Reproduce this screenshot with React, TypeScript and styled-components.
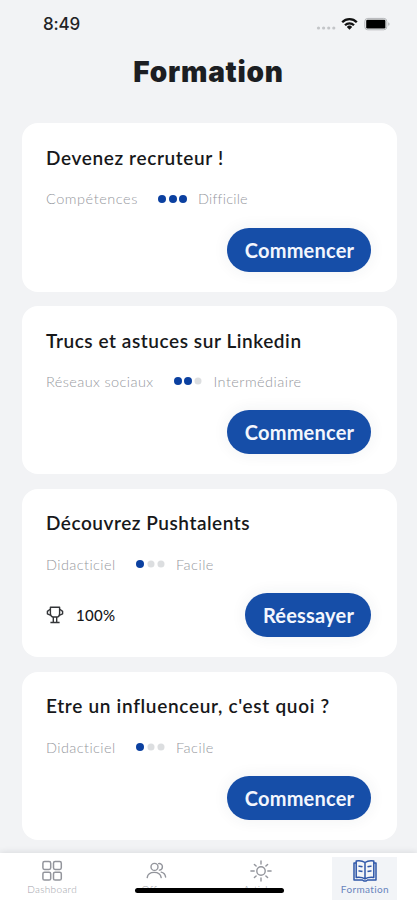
import React from "react";
import styled, { createGlobalStyle } from "styled-components";

const Global = createGlobalStyle`
  * { box-sizing: border-box; }
  body { margin: 0; background: #f2f3f5; font-family: Lato, "Open Sans", sans-serif; }
`;

const Screen = styled.div`
  width: 417px;
  height: 900px;
  display: flex;
  flex-direction: column;
  overflow: hidden;
  background: #f2f3f5;
`;

const StatusBar = styled.div`
  height: 48px;
  flex: none;
  display: flex;
  align-items: center;
  justify-content: space-between;
  padding: 0 26px 0 43px;
`;

const Clock = styled.span`
  font: 500 17px/20px Inter, sans-serif;
  letter-spacing: -0.2px;
  color: #222325;
`;

const StatusIcons = styled.svg`
  display: block;
`;

const Heading = styled.h1`
  margin: 0;
  height: 75px;
  flex: none;
  padding-top: 4px;
  text-align: center;
  font: 900 28px/40px Inter, sans-serif;
  letter-spacing: 0.75px;
  color: #1c1e22;
`;

const List = styled.main`
  flex: 1;
  min-height: 0;
  display: flex;
  flex-direction: column;
  gap: 14.6px;
  padding: 0.4px 20.5px 0 21.5px;
`;

const Card = styled.article`
  height: 168.2px;
  flex: none;
  display: flex;
  flex-direction: column;
  padding: 22.5px 25.5px 20px 24.5px;
  border-radius: 16px;
  background: #fff;
`;

const Title = styled.h2<{ $track: number }>`
  margin: 0;
  font-size: 19px;
  line-height: 24px;
  font-weight: 600;
  letter-spacing: ${(p) => p.$track}px;
  white-space: nowrap;
  color: #17181a;
`;

const Meta = styled.div`
  display: flex;
  align-items: center;
  height: 20px;
  margin-top: 18.8px;
  font-size: 14.5px;
  font-weight: 300;
  color: #96989e;
`;

const Label = styled.span<{ $width?: number; $track: number }>`
  width: ${(p) => (p.$width ? `${p.$width}px` : "auto")};
  letter-spacing: ${(p) => p.$track}px;
  white-space: nowrap;
`;

const Dots = styled.span`
  display: flex;
  gap: 2.3px;
  margin: 0 11px 0 20.4px;
`;

const Dot = styled.i<{ $on: boolean }>`
  width: 8px;
  height: 8px;
  border-radius: 50%;
  background: ${(p) => (p.$on ? "#0b40a0" : "#dcdee0")};
  transform: scale(${(p) => (p.$on ? 1 : 0.88)});
`;

const Footer = styled.div`
  display: flex;
  align-items: center;
  justify-content: space-between;
  margin-top: auto;
`;

const Score = styled.div`
  display: flex;
  align-items: center;
  gap: 12px;
  padding-bottom: 1px;
  font-size: 15px;
  font-weight: 500;
  letter-spacing: 0.3px;
  color: #17181a;
`;

const Action = styled.button<{ $width: number }>`
  width: ${(p) => p.$width}px;
  height: 44px;
  margin-left: auto;
  padding: 0 0 0 1px;
  border: 0;
  border-radius: 22px;
  background: #164ea8;
  box-shadow: 0 0 16px rgba(40, 50, 70, 0.07);
  color: #f3f6fd;
  font: 700 20px/44px Lato, sans-serif;
  letter-spacing: 0.2px;
`;

const TabBar = styled.nav`
  position: relative;
  height: 47px;
  flex: none;
  display: grid;
  grid-template-columns: repeat(4, 104.25px);
  justify-items: center;
  padding-top: 4px;
  background: #fff;
  box-shadow: 0 -1px 6px rgba(30, 40, 50, 0.11);
`;

const Tab = styled.a<{ $active?: boolean }>`
  width: 65px;
  height: 43px;
  display: flex;
  flex-direction: column;
  align-items: center;
  padding-top: 3px;
  background: ${(p) => (p.$active ? "#f2f4f7" : "transparent")};
  color: ${(p) => (p.$active ? "#2f57a9" : "#93959c")};
`;

const TabText = styled.span<{ $active?: boolean }>`
  font-size: 10px;
  line-height: 12px;
  margin-top: 1px;
  letter-spacing: 0.35px;
  font-weight: ${(p) => (p.$active ? 400 : 300)};
  color: ${(p) => (p.$active ? "#6884bd" : "#a0a2a9")};
`;

const HomeIndicator = styled.div`
  position: absolute;
  left: 134.5px;
  top: 35px;
  width: 149px;
  height: 5px;
  border-radius: 3px;
  background: #000;
`;

const Trophy = () => (
  <svg width="18" height="18" viewBox="0 0 18 18" fill="none" stroke="#333538" strokeWidth="1.4" strokeLinejoin="round">
    <path d="M4.4 1.2h9.2v6c0 2.4-1.3 3.8-2.9 3.8H7.3c-1.6 0-2.9-1.4-2.9-3.8z" />
    <path d="M4.2 3.2 1.4 5.4v2.4L4.8 9.4M13.8 3.2l2.8 2.2v2.4l-3.4 1.6M7.3 11v5.2M10.7 11v5.2M4.4 16.5h9.2" />
  </svg>
);

const GridIcon = () => (
  <svg width="22" height="22" viewBox="0 0 22 22" fill="none" stroke="currentColor" strokeWidth="1.5">
    <rect x="1.9" y="1.6" width="7.8" height="7.8" rx="1.6" />
    <rect x="12.5" y="1.6" width="7.8" height="7.8" rx="1.6" />
    <rect x="1.9" y="12.2" width="7.8" height="7.8" rx="1.6" />
    <rect x="12.5" y="12.2" width="7.8" height="7.8" rx="1.6" />
  </svg>
);

const PeopleIcon = () => (
  <svg width="22" height="22" viewBox="0 0 22 22" fill="none" stroke="currentColor" strokeWidth="1.4" strokeLinecap="round">
    <circle cx="9.5" cy="6.9" r="3.5" />
    <path d="M13.6 3.6c2-.5 3.8 1 3.8 3.1 0 1.8-1.3 3.2-3 3.4M2.2 17.6c.5-3.4 3.4-5.2 7-5.2s6.4 1.8 7 5.2M16.2 12.1c2.4.5 4 2 4.4 4.9" />
  </svg>
);

const SunIcon = () => (
  <svg width="22" height="22" viewBox="0 0 22 22" fill="none" stroke="currentColor" strokeWidth="1.4" strokeLinecap="round">
    <circle cx="11" cy="11" r="4.2" />
    <path d="M11 1v3M11 18v3M.9 11h3.3M17.8 11h3.3M4.4 4.4l1.7 1.7M15.9 15.9l1.7 1.7M4.4 17.6l1.7-1.7M15.9 6.1l1.7-1.7" />
  </svg>
);

const BookIcon = () => (
  <svg width="24" height="22" viewBox="0 0 24 22" fill="none" stroke="currentColor" strokeWidth="1.5" strokeLinejoin="round">
    <path d="M12 2.5C9.7.9 6 .6 3.2 1v16.5c3.2-.4 6.3-.1 8.8 1.4 2.5-1.5 5.6-1.8 8.8-1.4V1C18 .6 14.3.9 12 2.5zM12 2.5v16.4" />
    <path d="M3 3H1v17h8.5l1.3 1h2.4l1.3-1H23V3h-2M5.5 6.2c1.5-.2 2.7 0 4 .5M5.5 11c1.5-.2 2.7 0 4 .5M18.5 6.2c-1.5-.2-2.7 0-4 .5M18.5 11c-1.5-.2-2.7 0-4 .5" />
  </svg>
);

const courses = [
  { title: "Devenez recruteur !", track: 0.63, topic: "Compétences", topicWidth: 92, topicTrack: 0.55, level: 3, difficulty: "Difficile", difficultyTrack: 0.2, action: "Commencer", width: 144 },
  { title: "Trucs et astuces sur Linkedin", track: 0.56, topic: "Réseaux sociaux", topicWidth: 107.5, topicTrack: 0.4, level: 2, difficulty: "Intermédiaire", difficultyTrack: 0.46, action: "Commencer", width: 144 },
  { title: "Découvrez Pushtalents", track: 0.53, topic: "Didacticiel", topicWidth: 70, topicTrack: 0.42, level: 1, difficulty: "Facile", difficultyTrack: 0.5, action: "Réessayer", width: 126, score: "100%" },
  { title: "Etre un influenceur, c'est quoi ?", track: 0.69, topic: "Didacticiel", topicWidth: 70, topicTrack: 0.42, level: 1, difficulty: "Facile", difficultyTrack: 0.5, action: "Commencer", width: 144 },
];

const tabs = [
  { label: "Dashboard", Icon: GridIcon },
  { label: "Offres", Icon: PeopleIcon },
  { label: "Articles", Icon: SunIcon },
  { label: "Formation", Icon: BookIcon, active: true },
];

export default function App() {
  return (
    <Screen>
      <Global />
      <StatusBar>
        <Clock>8:49</Clock>
        <StatusIcons width="76" height="16" viewBox="0 0 76 16">
          <g fill="#c3c5c8">
            <circle cx="3.5" cy="12" r="1.6" />
            <circle cx="8.6" cy="12" r="1.6" />
            <circle cx="13.7" cy="12" r="1.6" />
            <circle cx="18.8" cy="12" r="1.6" />
          </g>
          <g fill="none" stroke="#111" strokeWidth="2.3">
            <path d="M27.2 6.2a10.3 10.3 0 0 1 14.6 0M30 9.2a6.4 6.4 0 0 1 9 0" />
          </g>
          <path d="M34.5 13.8l-2.7-2.9a3.9 3.9 0 0 1 5.4 0z" fill="#111" />
          <rect x="49.8" y="2.4" width="22" height="11.4" rx="3" fill="none" stroke="#b4b6b9" />
          <rect x="51.2" y="3.8" width="19.2" height="8.6" rx="1.2" fill="#000" />
          <path d="M73.4 6.2c1.4.5 1.4 3.1 0 3.6z" fill="#a5a7aa" />
        </StatusIcons>
      </StatusBar>
      <Heading>Formation</Heading>
      <List>
        {courses.map((c) => (
          <Card key={c.title}>
            <Title $track={c.track}>{c.title}</Title>
            <Meta>
              <Label $width={c.topicWidth} $track={c.topicTrack}>{c.topic}</Label>
              <Dots>
                {[0, 1, 2].map((i) => (
                  <Dot key={i} $on={i < c.level} />
                ))}
              </Dots>
              <Label $track={c.difficultyTrack}>{c.difficulty}</Label>
            </Meta>
            <Footer>
              {c.score && (
                <Score>
                  <Trophy />
                  {c.score}
                </Score>
              )}
              <Action $width={c.width}>{c.action}</Action>
            </Footer>
          </Card>
        ))}
      </List>
      <TabBar>
        {tabs.map(({ label, Icon, active }) => (
          <Tab key={label} $active={active}>
            <Icon />
            <TabText $active={active}>{label}</TabText>
          </Tab>
        ))}
        <HomeIndicator />
      </TabBar>
    </Screen>
  );
}
